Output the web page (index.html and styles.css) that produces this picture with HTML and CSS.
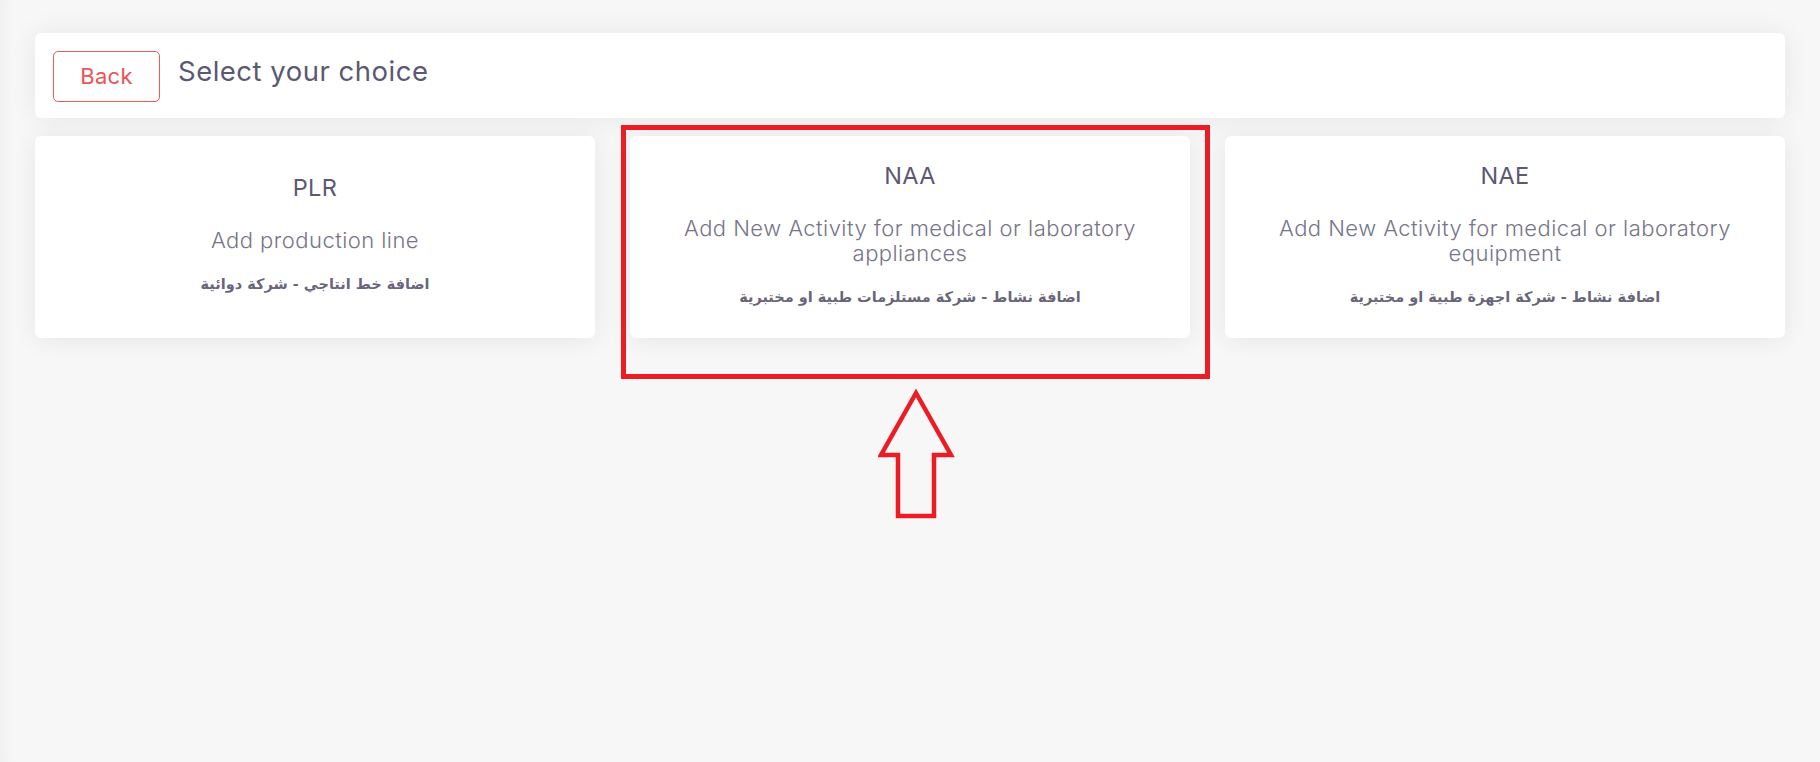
FILE: index.html
```html
<!DOCTYPE html>
<html lang="en">
<head>
<meta charset="utf-8">
<title>Select your choice</title>
<link rel="stylesheet" href="styles.css">
</head>
<body>
<main class="page">
  <header class="topbar">
    <button class="btn-back" type="button">Back</button>
    <h1 class="topbar-title">Select your choice</h1>
  </header>
  <section class="choices">
    <article class="choice">
      <h2 class="choice-code">PLR</h2>
      <p class="choice-desc">Add production line</p>
      <p class="choice-ar" dir="rtl" lang="ar">اضافة خط انتاجي - شركة دوائية</p>
    </article>
    <article class="choice">
      <h2 class="choice-code">NAA</h2>
      <p class="choice-desc">Add New Activity for medical or laboratory appliances</p>
      <p class="choice-ar" dir="rtl" lang="ar">اضافة نشاط - شركة مستلزمات طبية او مختبرية</p>
    </article>
    <article class="choice">
      <h2 class="choice-code">NAE</h2>
      <p class="choice-desc">Add New Activity for medical or laboratory equipment</p>
      <p class="choice-ar" dir="rtl" lang="ar">اضافة نشاط - شركة اجهزة طبية او مختبرية</p>
    </article>
  </section>
  <div class="annot-box"></div>
  <svg class="annot-arrow" width="84" height="140" viewBox="0 0 84 140">
    <polygon points="38,5 3,67 20,67 20,128 56,128 56,67 73,67" fill="none" stroke="#ed1c24" stroke-width="4.5" stroke-linejoin="miter"/>
  </svg>
</main>
</body>
</html>
```

FILE: styles.css
```css
* { box-sizing: border-box; }
html, body { margin: 0; padding: 0; }
body {
  background: #f7f7f7;
  font-family: "Inter", "Open Sans", "Liberation Sans", sans-serif;
  color: #5b5874;
  height: 762px;
  overflow: hidden;
}
.page {
  position: relative;
  min-height: 762px;
  padding: 33px 35px 0 35px;
  box-shadow: inset 14px 0 16px -12px rgba(0,0,0,0.05);
}
.topbar {
  display: flex;
  align-items: center;
  gap: 18px;
  height: 85px;
  padding: 0 18px;
  background: #fff;
  border-radius: 6px;
  box-shadow: 0 0 28px rgba(0,0,0,0.07);
}
.btn-back {
  width: 107px;
  height: 51px;
  border: 1px solid #ec5a5c;
  border-radius: 5px;
  background: #fff;
  color: #ea5455;
  font-family: inherit;
  font-size: 22px;
  font-weight: 400;
  letter-spacing: 0.3px;
  padding: 0;
  margin-top: 1px;
}
.topbar-title {
  margin: 0 0 10px 0;
  font-size: 27.5px;
  line-height: 34px;
  font-weight: 400;
  color: #5b5874;
  letter-spacing: 0.5px;
}
.choices {
  display: grid;
  grid-template-columns: repeat(3, 1fr);
  gap: 35px;
  margin-top: 18px;
}
.choice {
  display: flex;
  flex-direction: column;
  align-items: center;
  justify-content: center;
  text-align: center;
  min-height: 202px;
  padding: 24px 40px 30px;
  background: #fff;
  border-radius: 6px;
  box-shadow: 0 2px 26px rgba(0,0,0,0.07);
}
.choice-code {
  margin: 0;
  font-size: 23.5px;
  line-height: 29px;
  font-weight: 400;
  color: #5b5874;
  letter-spacing: 0.4px;
}
.choice-desc {
  margin: 26px 0 0 0;
  font-size: 22px;
  line-height: 25px;
  font-weight: 300;
  color: #77758a;
  letter-spacing: 0.45px;
}
.choice-ar {
  margin: 20px 0 0 0;
  font-family: "DejaVu Sans", "Liberation Sans", sans-serif;
  font-size: 14.5px;
  line-height: 22px;
  font-weight: 700;
  color: #69667b;
}
.annot-box {
  position: absolute;
  left: 621px;
  top: 125px;
  width: 589px;
  height: 254px;
  border: 5px solid #ed1c24;
}
.annot-arrow {
  position: absolute;
  left: 878px;
  top: 388px;
}
```
